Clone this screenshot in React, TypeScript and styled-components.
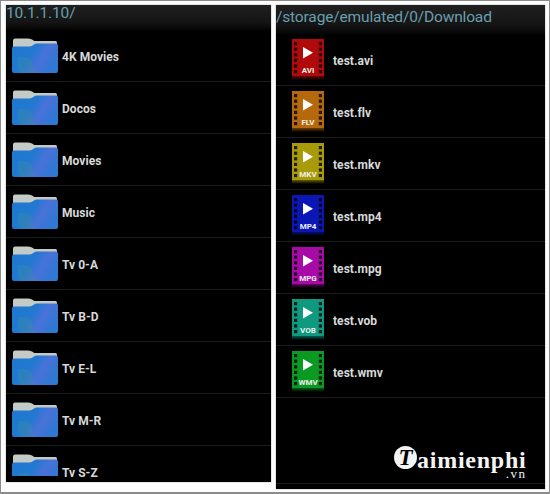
import * as React from 'react'
import styled, { createGlobalStyle } from 'styled-components'

const GlobalStyle = createGlobalStyle`
  html, body {
    margin: 0;
    padding: 0;
    background: #fff;
  }
`

const Frame = styled.div`
  position: relative;
  box-sizing: border-box;
  width: 550px;
  height: 494px;
  padding: 4px 0 0 5px;
  display: flex;
  align-items: flex-start;
  gap: 5px;
  background: #fcfcfc;
  border: solid #8c8c8c;
  border-width: 1px 1px 2px 1px;
  overflow: hidden;
  font-family: Roboto, 'Liberation Sans', sans-serif;
`

const Panel = styled.section<{ $width: number; $height: number }>`
  width: ${(p) => p.$width}px;
  height: ${(p) => p.$height}px;
  flex: none;
  display: flex;
  flex-direction: column;
  background: #000;
  overflow: hidden;
  box-shadow: 0 0 1px #777;
`

const PathBar = styled.div<{ $height: number; $top: number }>`
  height: ${(p) => p.$height}px;
  flex: none;
  box-sizing: border-box;
  padding-top: ${(p) => p.$top}px;
  font-size: 15.5px;
  line-height: 15px;
  letter-spacing: -0.15px;
  color: #6a9fae;
  background: linear-gradient(#202020, #141414 70%, #050505);
  white-space: nowrap;
`

const Row = styled.div<{ $file?: boolean }>`
  height: 52px;
  flex: none;
  box-sizing: border-box;
  display: flex;
  align-items: center;
  gap: ${(p) => (p.$file ? 9 : 4)}px;
  padding-left: ${(p) => (p.$file ? 16 : 6)}px;
  border-bottom: 1px solid #1b1b1b;
`

const Name = styled.span`
  margin-top: 2px;
  font-size: 12px;
  font-weight: 700;
  letter-spacing: 0.05px;
  color: #d9d9d9;
`

const FolderSlot = styled.div<{ $cut?: boolean }>`
  width: 46px;
  height: ${(p) => (p.$cut ? 22 : 36)}px;
  align-self: flex-start;
  margin-top: 8px;
  overflow: hidden;
`

const BottomRule = styled.div`
  margin-top: auto;
  height: 5px;
  border-top: 1px solid #1b1b1b;
`

const Watermark = styled.div`
  position: absolute;
  left: 393px;
  top: 445px;
  display: flex;
  align-items: flex-start;
  color: #f4f4f4;
  font-family: 'Liberation Serif', serif;
`

const Badge = styled.span`
  width: 23px;
  height: 23px;
  border-radius: 50%;
  background: #f4f4f4;
  color: #000;
  font-size: 23px;
  font-weight: 700;
  font-style: italic;
  line-height: 24px;
  text-align: center;
`

const Brand = styled.div`
  display: flex;
  flex-direction: column;
  align-items: flex-end;
`

const BrandName = styled.span`
  margin-top: 4px;
  font-size: 24px;
  font-weight: 700;
  line-height: 20px;
  letter-spacing: 0.75px;
`

const BrandTld = styled.span`
  font-size: 13px;
  line-height: 8px;
  letter-spacing: 1.5px;
`

const Folder: React.FC<{ id: string }> = ({ id }) => (
  <svg width="46" height="36" viewBox="0 0 46 36">
    <defs>
      <linearGradient id={`f${id}`} x1="0" x2="1" y1="0.1" y2="0.5">
        <stop offset="0" stopColor="#1f78cf" />
        <stop offset="0.45" stopColor="#2179d2" />
        <stop offset="0.7" stopColor="#4a72d8" />
        <stop offset="1" stopColor="#2f78d4" />
      </linearGradient>
    </defs>
    <path d="M1 10V2.5Q1 .5 3 .5H16Q19 .5 21 2L22 3H43.5Q45 3 45 5V9Z" fill="#c4cac6" />
    <path
      d="M0 10.5Q0 8.5 2 8.5H17Q20 8.5 22 6.5Q23 5.5 25 5.5H44Q46 5.5 46 7.5V33Q46 35 44 35H2Q0 35 0 33Z"
      fill={`url(#f${id})`}
    />
    <path d="M6 20Q16 16 20 24L23 35H8Q5 28 6 20Z" fill="#3f8f9c" opacity="0.35" />
  </svg>
)

const FileIcon: React.FC<{ id: string; label: string; color: string }> = ({ id, label, color }) => {
  const holes = [3, 8.6, 14.2, 19.8, 25.4, 31]
  return (
    <svg width="32" height="41" viewBox="0 0 32 41">
      <defs>
        <linearGradient id={`r${id}`} x1="0" x2="0" y1="0" y2="1">
          <stop offset="0" stopColor={color} stopOpacity="0.6" />
          <stop offset="1" stopColor={color} stopOpacity="0" />
        </linearGradient>
      </defs>
      <rect x="0" y="0" width="32" height="37" fill={color} />
      <rect x="0" y="37" width="32" height="4" fill={`url(#r${id})`} />
      {holes.map((y) => (
        <React.Fragment key={y}>
          <rect x="2" y={y} width="3.2" height="3.2" fill="#000" opacity="0.8" />
          <rect x="26.8" y={y} width="3.2" height="3.2" fill="#000" opacity="0.8" />
        </React.Fragment>
      ))}
      <path d="M11 8 21 13.8 11 19.6Z" fill="#fff" />
      <text
        x="16"
        y="34"
        textAnchor="middle"
        fontFamily="Roboto, 'Liberation Sans', sans-serif"
        fontWeight="700"
        fontSize="8"
        fill="#eee"
      >
        {label}
      </text>
    </svg>
  )
}

const folders = ['4K Movies', 'Docos', 'Movies', 'Music', 'Tv 0-A', 'Tv B-D', 'Tv E-L', 'Tv M-R', 'Tv S-Z']

const files = [
  { name: 'test.avi', label: 'AVI', color: '#b00a0a' },
  { name: 'test.flv', label: 'FLV', color: '#b5690c' },
  { name: 'test.mkv', label: 'MKV', color: '#a89a08' },
  { name: 'test.mp4', label: 'MP4', color: '#0a17b4' },
  { name: 'test.mpg', label: 'MPG', color: '#a80aa8' },
  { name: 'test.vob', label: 'VOB', color: '#0f9a80' },
  { name: 'test.wmv', label: 'WMV', color: '#0a9a22' },
]

const App: React.FC = () => (
  <Frame>
    <GlobalStyle />
    <Panel $width={265} $height={477}>
      <PathBar $height={25} $top={1}>10.1.1.10/</PathBar>
      {folders.map((name, i) => (
        <Row key={name}>
          <FolderSlot $cut={i === folders.length - 1}>
            <Folder id={String(i)} />
          </FolderSlot>
          <Name>{name}</Name>
        </Row>
      ))}
    </Panel>
    <Panel $width={269} $height={484}>
      <PathBar $height={29} $top={5}>/storage/emulated/0/Download</PathBar>
      {files.map((file) => (
        <Row key={file.name} $file>
          <FileIcon id={file.label} label={file.label} color={file.color} />
          <Name>{file.name}</Name>
        </Row>
      ))}
      <BottomRule />
    </Panel>
    <Watermark>
      <Badge>T</Badge>
      <Brand>
        <BrandName>aimienphi</BrandName>
        <BrandTld>.vn</BrandTld>
      </Brand>
    </Watermark>
  </Frame>
)

export default App
